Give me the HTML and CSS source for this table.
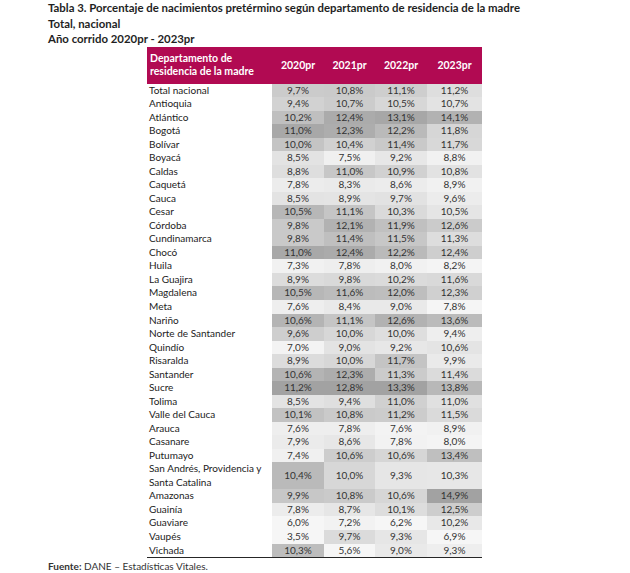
FILE: index.html
```html
<!DOCTYPE html>
<html lang="es">

<head>
    <meta charset="UTF-8">
    <meta name="viewport" content="width=device-width, initial-scale=1.0">
    <title>Tabla 3</title>
    <link rel="stylesheet" href="styles.css">
</head>

<body>
    <div class="page">
        <div class="caption">
            <p>Tabla 3. Porcentaje de nacimientos pretérmino según departamento de residencia de la madre</p>
            <p>Total, nacional</p>
            <p>Año corrido 2020pr - 2023pr</p>
        </div>

        <table class="heat">
            <thead>
                <tr>
                    <th class="dept">Departamento de<br>residencia de la madre</th>
                    <th>2020pr</th>
                    <th>2021pr</th>
                    <th>2022pr</th>
                    <th>2023pr</th>
                </tr>
            </thead>
            <tbody id="rows"></tbody>
        </table>

        <p class="source"><b>Fuente:</b> DANE – Estadísticas Vitales.</p>
    </div>

    <script>
        const data = [
            ["Total nacional", 9.7, 10.8, 11.1, 11.2],
            ["Antioquia", 9.4, 10.7, 10.5, 10.7],
            ["Atlántico", 10.2, 12.4, 13.1, 14.1],
            ["Bogotá", 11.0, 12.3, 12.2, 11.8],
            ["Bolívar", 10.0, 10.4, 11.4, 11.7],
            ["Boyacá", 8.5, 7.5, 9.2, 8.8],
            ["Caldas", 8.8, 11.0, 10.9, 10.8],
            ["Caquetá", 7.8, 8.3, 8.6, 8.9],
            ["Cauca", 8.5, 8.9, 9.7, 9.6],
            ["Cesar", 10.5, 11.1, 10.3, 10.5],
            ["Córdoba", 9.8, 12.1, 11.9, 12.6],
            ["Cundinamarca", 9.8, 11.4, 11.5, 11.3],
            ["Chocó", 11.0, 12.4, 12.2, 12.4],
            ["Huila", 7.3, 7.8, 8.0, 8.2],
            ["La Guajira", 8.9, 9.8, 10.2, 11.6],
            ["Magdalena", 10.5, 11.6, 12.0, 12.3],
            ["Meta", 7.6, 8.4, 9.0, 7.8],
            ["Nariño", 10.6, 11.1, 12.6, 13.6],
            ["Norte de Santander", 9.6, 10.0, 10.0, 9.4],
            ["Quindío", 7.0, 9.0, 9.2, 10.6],
            ["Risaralda", 8.9, 10.0, 11.7, 9.9],
            ["Santander", 10.6, 12.3, 11.3, 11.4],
            ["Sucre", 11.2, 12.8, 13.3, 13.8],
            ["Tolima", 8.5, 9.4, 11.0, 11.0],
            ["Valle del Cauca", 10.1, 10.8, 11.2, 11.5],
            ["Arauca", 7.6, 7.8, 7.6, 8.9],
            ["Casanare", 7.9, 8.6, 7.8, 8.0],
            ["Putumayo", 7.4, 10.6, 10.6, 13.4],
            ["San Andrés, Providencia y<br>Santa Catalina", 10.4, 10.0, 9.3, 10.3],
            ["Amazonas", 9.9, 10.8, 10.6, 14.9],
            ["Guainía", 7.8, 8.7, 10.1, 12.5],
            ["Guaviare", 6.0, 7.2, 6.2, 10.2],
            ["Vaupés", 3.5, 9.7, 9.3, 6.9],
            ["Vichada", 10.3, 5.6, 9.0, 9.3],
        ]

        // per column colour scale, light -> dark grey
        const low = [6.0, 5.6, 6.2, 6.9]
        const high = [11.2, 12.8, 13.3, 14.9]

        function shade(v, col) {
            let d = (v - low[col]) / (high[col] - low[col]);
            d = Math.max(0, Math.min(1, d));
            const g = Math.round(246 - 84 * d * d);
            return `rgb(${g}, ${g}, ${g})`;
        }

        const rows = document.getElementById("rows")
        data.forEach(row => {
            const tr = document.createElement("tr")
            let html = `<td class="dept">${row[0]}</td>`
            for (let i = 1; i < 5; i++) {
                const text = row[i].toFixed(1).replace(".", ",") + "%"
                html += `<td class="num" style="background-color: ${shade(row[i], i - 1)}">${text}</td>`
            }
            tr.innerHTML = html
            rows.appendChild(tr)
        });
    </script>
</body>

</html>
```

FILE: styles.css
```css
body {
    margin: 0;
    background-color: #fff;
    font-family: Lato, "Open Sans", sans-serif;
    color: #262626;
}

.page {
    padding: 0 0 0 48px;
}

.caption p {
    margin: 0;
    font-size: 11.4px;
    font-weight: bold;
    line-height: 15.5px;
    color: #1f1f1f;
}

.heat {
    margin: 0 0 0 99px;
    width: 335px;
    border-collapse: collapse;
    table-layout: fixed;
    font-size: 10px;
    border-bottom: 1.5px solid #262626;
}

.heat th {
    background-color: #b10a52;
    color: #fff;
    font-weight: bold;
    font-size: 10.5px;
    height: 37px;
    padding: 0;
    line-height: 13px;
    text-align: center;
}

.heat th.dept {
    text-align: left;
    padding-left: 3px;
    width: 122px;
}

.heat th:nth-child(2),
.heat th:nth-child(4) {
    width: 52px;
}

.heat th:nth-child(3) {
    width: 51px;
}

.heat td {
    padding: 0;
    height: 13.54px;
    line-height: 13.5px;
}

.heat td.dept {
    padding-left: 2px;
    color: #222;
}

.heat td.num {
    text-align: center;
    color: #333;
}

.source {
    margin: 2px 0 0 0;
    font-size: 10px;
    color: #333;
}
```
